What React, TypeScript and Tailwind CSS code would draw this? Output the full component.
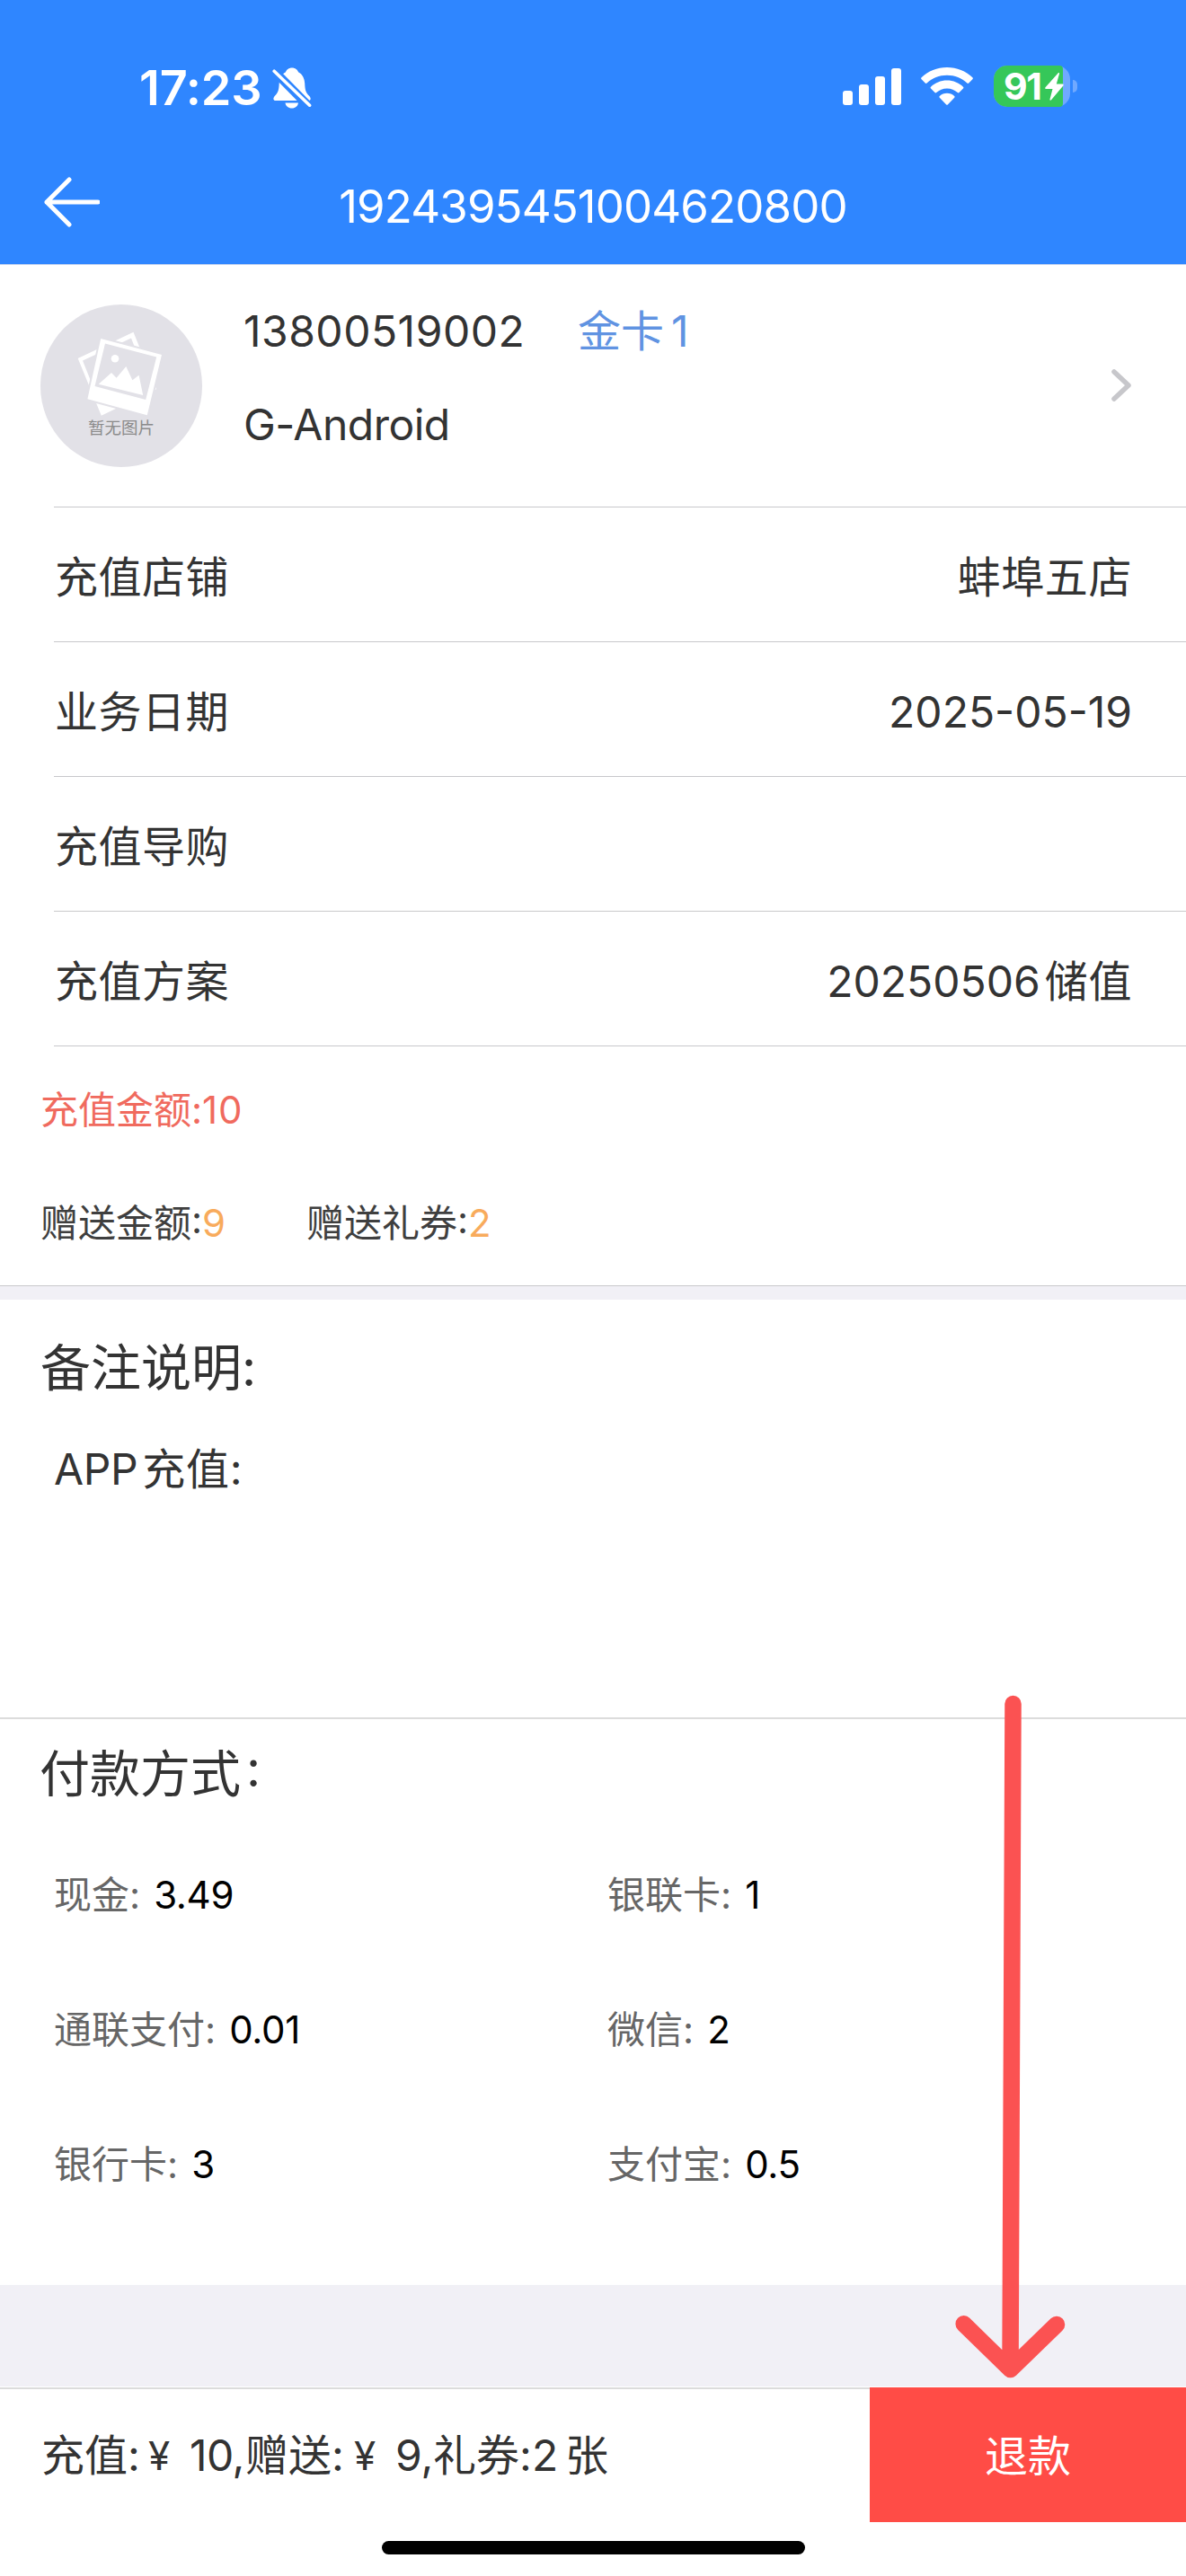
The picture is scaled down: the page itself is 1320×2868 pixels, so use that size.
import type { ReactNode } from 'react'

interface InfoRowProps {
  label: string
  value?: ReactNode
}

const payments = [
  { name: '现金', amount: '3.49' },
  { name: '银联卡', amount: '1' },
  { name: '通联支付', amount: '0.01' },
  { name: '微信', amount: '2' },
  { name: '银行卡', amount: '3' },
  { name: '支付宝', amount: '0.5' },
]

function StatusBar() {
  return (
    <div className="flex h-[156px] items-start justify-between pl-[155px] pr-[121px] text-white">
      <div className="flex items-start">
        <span className="mt-[70px] w-[148px] whitespace-nowrap text-[54px] font-semibold leading-[56px] tracking-[-0.2px]">
          17:23
        </span>
        <svg className="mt-[75px] h-[46px] w-[44px]" viewBox="0 0 44 46" fill="none">
          <path
            d="M22 0.5c-3.6 0-6.2 2.2-7 4.7-4.500 2-7 7-7.300 12.500-.3 7-.8 10-5 14.200C.8 33.900.8 37 3.800 37h36.500c3 0 3-3.100 1-5.100-4.300-4.200-4.800-7.200-5.100-14.200-.3-5.500-2.700-10.500-7.200-12.500-.8-2.500-3.400-4.700-7-4.700z"
            fill="#fff"
          />
          <path d="M14.500 39.500h14.500c-.5 3.600-3.200 6-7.200 6s-6.800-2.400-7.300-6z" fill="#fff" />
          <path d="M2 4l39.500 40" stroke="#2f86ff" strokeWidth="10" />
          <path d="M2.200 4.200l39.400 38" stroke="#fff" strokeWidth="3.600" strokeLinecap="round" />
        </svg>
      </div>
      <div className="mt-[73px] flex items-start">
        <svg className="mt-[3px] h-[41px] w-[65px]" viewBox="0 0 65 41" fill="#fff">
          <rect x="0" y="25" width="11" height="16" rx="3" />
          <rect x="18" y="18" width="11" height="23" rx="3" />
          <rect x="36" y="9" width="11" height="32" rx="3" />
          <rect x="54" y="0" width="11" height="41" rx="3" />
        </svg>
        <svg className="ml-[22px] mt-[2px] h-[42px] w-[58px]" viewBox="0 0 58 42" fill="#fff">
          <path d="M29 0C18 0 8 4.200.6 11.300c-.6.6-.6 1.300 0 1.900l4.200 4.400c.6.5 1.200.5 1.800 0C12.600 11.800 20.400 8.800 29 8.800s16.400 3 22.400 8.800c.6.5 1.200.5 1.800 0l4.200-4.400c.6-.6.6-1.300 0-1.900C50 4.200 40 0 29 0z" />
          <path d="M29 14.500c-7 0-13.300 2.700-18 7.200-.6.6-.6 1.200 0 1.800l4.500 4.600c.5.500 1.100.5 1.700 0 3.200-3 7.300-4.700 11.800-4.700s8.600 1.700 11.800 4.700c.6.5 1.200.5 1.700 0l4.500-4.600c.6-.6.6-1.200 0-1.800-4.700-4.500-11-7.200-18-7.200z" />
          <path d="M29 28.800c-3.100 0-6 1.200-8.200 3.200-.6.500-.6 1.200 0 1.700l7.400 7.700c.5.500 1.100.5 1.600 0l7.400-7.700c.6-.5.6-1.200 0-1.700-2.200-2-5.100-3.200-8.200-3.200z" />
        </svg>
        <div className="relative ml-[23px] h-[46px] w-[85px] rounded-[15px] bg-[#70a9ff]">
          <div className="flex h-full w-[77px] items-center rounded-l-[15px] rounded-r-[4px] bg-[#35c759] pl-[11px]">
            <span className="text-[41px] font-bold leading-[46px] tracking-[-1.5px]">91</span>
          </div>
          <svg className="absolute left-[57px] top-[8px] h-[31px] w-[21px]" viewBox="0 0 21 31" fill="#fff">
            <path d="M14.800.3L.5 16.200c-.8 1 0 1.800.8 1.800h7.200L5.500 29.600c-.3 1.200.7 1.600 1.500.7L20.300 14.400c.8-1 .2-1.800-.8-1.800h-6.700L16 1.200c.3-1.200-.5-1.600-1.200-.9z" />
          </svg>
        </div>
        <div className="ml-[3px] mt-[16px] h-[14px] w-[5px] rounded-r-full bg-[#70a9ff]" />
      </div>
    </div>
  )
}

function Avatar() {
  return (
    <div className="relative h-[181px] w-[180px] shrink-0 overflow-hidden rounded-full bg-[#e2e1e7]">
      <svg className="h-full w-full" viewBox="0 0 180 181">
        <path
          d="M103.500 30.700L41.700 60l26.100 63.700L129 94.300zM101 37.500L113 68 60 95 47 62.500z"
          fill="#fff"
          fillRule="evenodd"
        />
        <path d="M67.200 38L135 56l-16.200 67.300-66.400-18z" fill="#fff" stroke="#e2e1e7" strokeWidth="4" />
        <path d="M67.200 38L135 56l-16.200 67.300-66.400-18z" fill="#fff" />
        <path d="M72 43.500l57.200 15-12 47.500-56.700-15z" fill="#e2e1e7" />
        <path d="M64.700 88.700L79 76l5.600 5.700L95.300 69l7.100 15.300 7.200-5.600 4.600 22.300z" fill="#fff" />
        <circle cx="83" cy="60.300" r="4.300" fill="#fff" />
      </svg>
      <span className="absolute left-0 top-[126px] w-full text-center text-[18.500px] leading-[22px] text-[#8b8b8b]">
        暂无图片
      </span>
    </div>
  )
}

function InfoRow({ label, value }: InfoRowProps) {
  return (
    <div className="ml-[60px] flex h-[150px] items-center justify-between border-b border-[#c8c8cb] pl-px pr-[60px] pt-[7px] text-[48px]">
      <span className="tracking-[0.5px]">{label}</span>
      <span>{value}</span>
    </div>
  )
}

export default function App() {
  return (
    <div
      lang="zh-CN"
      className="relative flex h-[2868px] w-[1320px] flex-col overflow-hidden bg-white font-['Inter','Noto_Sans_CJK_SC',sans-serif] leading-[60px] text-[#333]"
    >
      <header className="h-[294px] bg-[#2f86ff]">
        <StatusBar />
        <div className="grid h-[138px] grid-cols-[200px_1fr_200px] items-center">
          <svg className="ml-[49px] h-[56px] w-[62px]" viewBox="0 0 62 56" fill="none" stroke="#fff" strokeWidth="5">
            <path d="M28 3L3 28l25 25M3 28h57" strokeLinecap="round" strokeLinejoin="round" />
          </svg>
          <h1 className="mt-[9px] text-center text-[51px] font-normal tracking-[-0.9px] text-white">
            1924395451004620800
          </h1>
        </div>
      </header>

      <section className="flex h-[270px] items-start border-t border-[#c5d4ee] pl-[45px] pr-[60px] pt-[44px] text-[48px]">
        <Avatar />
        <div className="ml-[46px] flex-1">
          <p className="flex">
            <span className="w-[313px] tracking-[0.5px]">13800519002</span>
            <span className="ml-[59px] text-[#6093e2]">
              金卡<span className="ml-[8px]">1</span>
            </span>
          </p>
          <p className="mt-[44px] tracking-[-0.5px]">G-Android</p>
        </div>
        <svg
          className="mt-[71px] h-[38px] w-[24px]"
          viewBox="0 0 24 38"
          fill="none"
          stroke="#c7c7cb"
          strokeWidth="5.500"
          strokeLinecap="round"
          strokeLinejoin="round"
        >
          <path d="M4 4l16 15L4 34" />
        </svg>
      </section>
      <div className="ml-[60px] h-px shrink-0 bg-[#c8c8cb]" />

      <InfoRow label="充值店铺" value={<span className="tracking-[0.6px]">蚌埠五店</span>} />
      <InfoRow label="业务日期" value="2025-05-19" />
      <InfoRow label="充值导购" />
      <InfoRow label="充值方案" value={<>20250506<span className="ml-[5px] tracking-[0.6px]">储值</span></>} />

      <section className="flex h-[267px] shrink-0 flex-col border-b border-[#c8c8cb] pl-[45px] pt-[41px] text-[42px]">
        <p className="text-[#f06a5e]">
          充值金额:<span className="tracking-[0.8px]">10</span>
        </p>
        <p className="mt-[66px] flex text-[#3f3f3f]">
          <span className="w-[296px]">
            赠送金额:<span className="text-[#f8ab5c]">9</span>
          </span>
          <span>
            赠送礼券:<span className="text-[#f8ab5c]">2</span>
          </span>
        </p>
      </section>
      <div className="h-[15px] shrink-0 bg-[#f1f0f6]" />

      <section className="h-[467px] shrink-0 border-b-2 border-[#dcdcdc] pt-[46px]">
        <h2 className="pl-[45px] text-[56px]">备注说明:</h2>
        <p className="mt-[53px] pl-[60px] text-[48px] tracking-[-0.4px]">
          APP<span className="ml-[5px] tracking-[0.8px]">充值:</span>
        </p>
      </section>

      <section className="h-[630px] shrink-0 pt-[31px]">
        <h2 className="pl-[44px] text-[56px]">
          付款方式<span className="relative -top-[6px] ml-[6px]">:</span>
        </h2>
        <div className="mt-[30px] grid grid-cols-[616px_1fr] pl-[60px] text-[42px]">
          {payments.map((p) => (
            <p key={p.name} className="flex h-[150px] items-center">
              <span className="text-[#666]">{p.name}:</span>
              <span className="ml-[15px] tracking-[-0.3px] text-black">{p.amount}</span>
            </p>
          ))}
        </div>
      </section>
      <div className="h-[113px] shrink-0 bg-[#f1f0f6]" />

      <footer className="mt-px flex h-[150px] shrink-0">
        <p className="flex flex-1 items-center whitespace-pre border-t-2 border-[#dcdcdc] pl-[46px] text-[48px]">
          <span className="w-[119px]">充值:</span>
          <span className="w-[46px] text-[44px]">¥</span>
          <span className="w-[62px] tracking-[-0.5px]">10,</span>
          <span className="w-[121px]">赠送:</span>
          <span className="w-[46px] text-[44px]">¥</span>
          <span className="w-[42px]">9,</span>
          <span className="w-[110px]">礼券:</span>
          <span className="w-[37px]">2</span>
          <span>张</span>
        </p>
        <button className="w-[352px] bg-[#ff4c46] pt-[3px] text-[48px] text-white">退款</button>
      </footer>
      <div className="mx-auto mt-[21px] h-[15px] w-[471px] shrink-0 rounded-full bg-black" />

      {/* pointer to the refund button */}
      <svg
        className="absolute left-[1060px] top-[1880px] h-[780px] w-[130px]"
        viewBox="0 0 130 780"
        fill="none"
        stroke="#fb5252"
        strokeWidth="18.500"
        strokeLinecap="round"
        strokeLinejoin="round"
      >
        <path d="M67.500 17L64.500 758M12.700 707.300L64.500 758l51.500-50" />
      </svg>
    </div>
  )
}
